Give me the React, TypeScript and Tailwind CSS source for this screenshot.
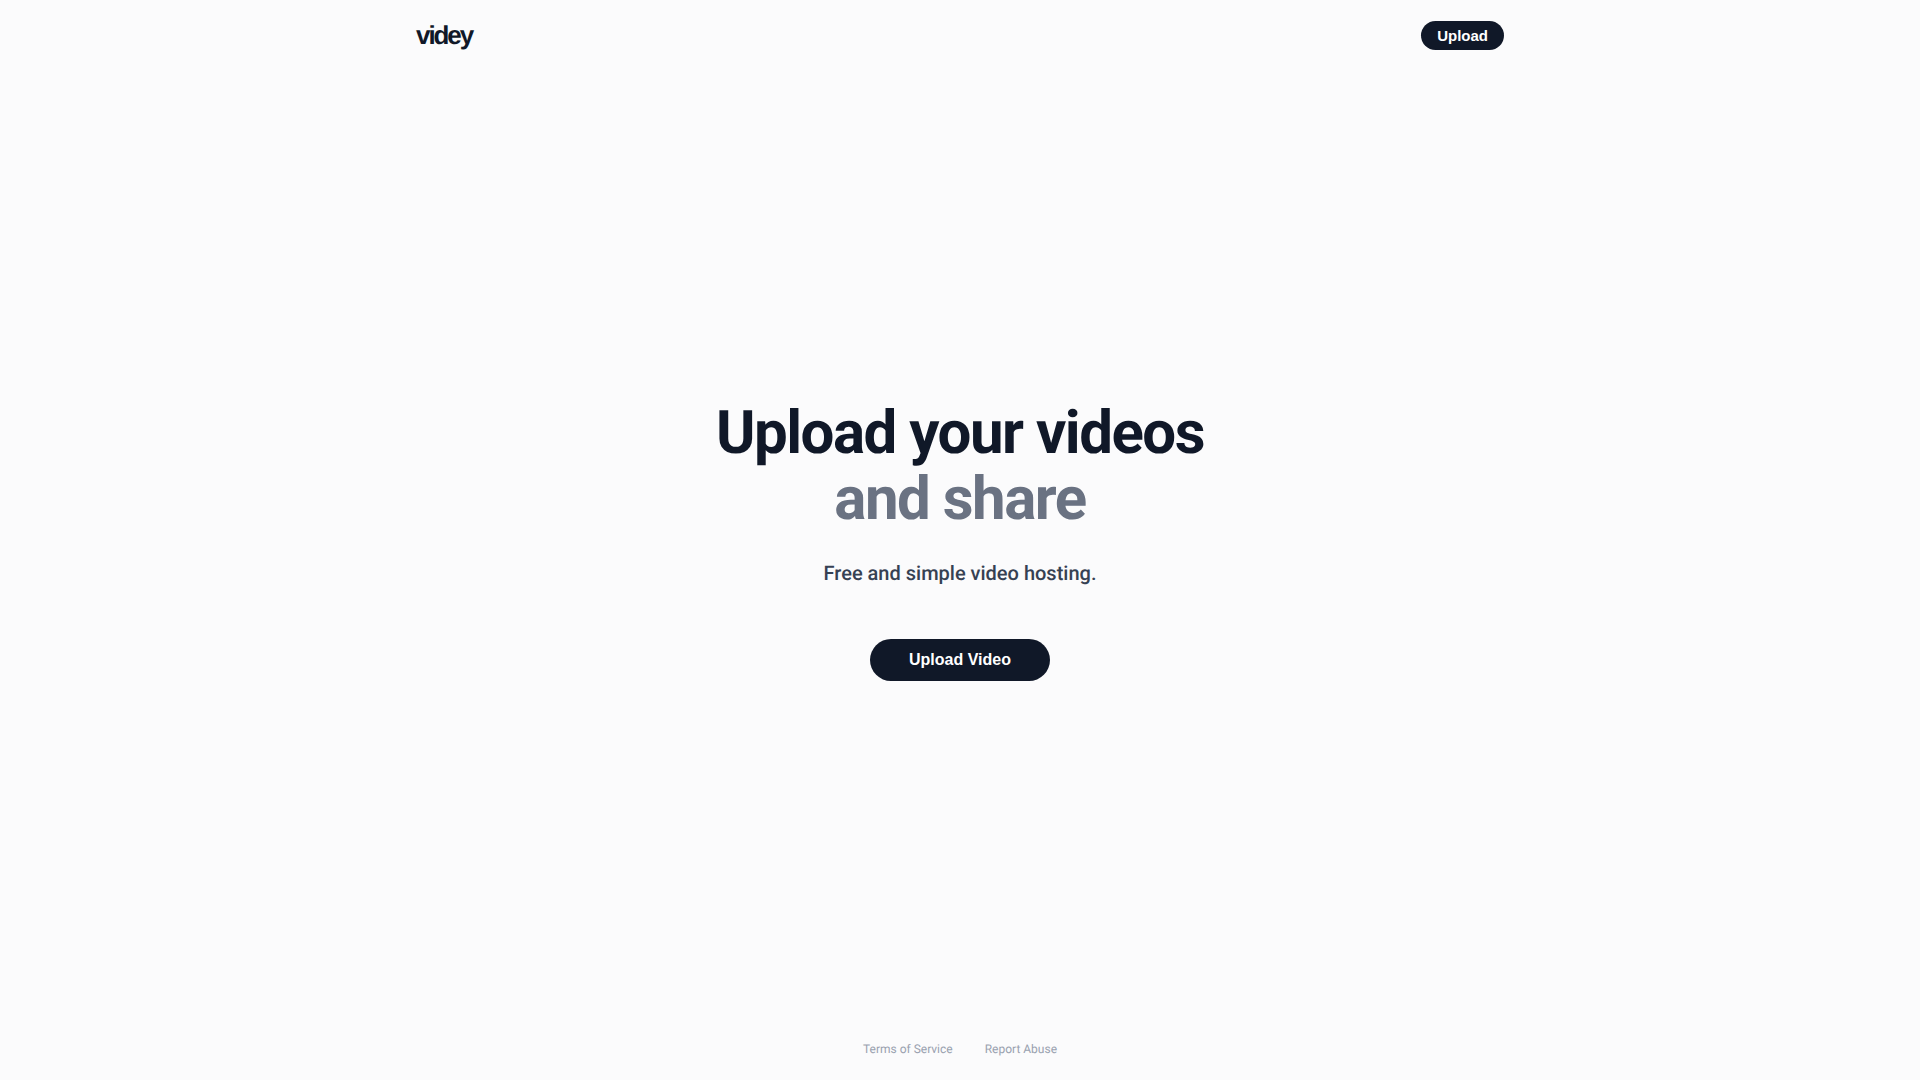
export default function App() {
  return (
    <div className="flex h-screen flex-col bg-[#fbfbfc] font-['Roboto',sans-serif] antialiased [text-rendering:geometricPrecision]">
      <header className="mx-auto flex w-full max-w-6xl items-center justify-between px-8 pt-[21px]">
        <a href="#" className="font-['Liberation_Sans',sans-serif] text-[26px] leading-[29px] font-bold tracking-[-0.08em] text-gray-900">
          videy
        </a>
        <button className="h-[29px] rounded-full bg-gray-900 px-4 pt-px font-['Liberation_Sans',sans-serif] text-[15px] font-semibold text-white">
          Upload
        </button>
      </header>

      <main className="flex flex-1 flex-col items-center justify-center pb-[10px] text-center">
        <h1 className="text-6xl leading-[66px] font-bold tracking-tight text-gray-900">
          Upload your videos
          <br />
          <span className="text-gray-500">and share</span>
        </h1>
        <p className="mt-[27px] text-xl font-medium text-gray-700">Free and simple video hosting.</p>
        <button className="mt-[52px] h-[42px] rounded-full bg-gray-900 px-[39px] font-['Liberation_Sans',sans-serif] text-base font-semibold text-white">
          Upload Video
        </button>
      </main>

      <footer className="flex justify-center gap-8 pb-[23px] text-xs text-gray-400">
        <a href="#">Terms of Service</a>
        <a href="#">Report Abuse</a>
      </footer>
    </div>
  );
}
